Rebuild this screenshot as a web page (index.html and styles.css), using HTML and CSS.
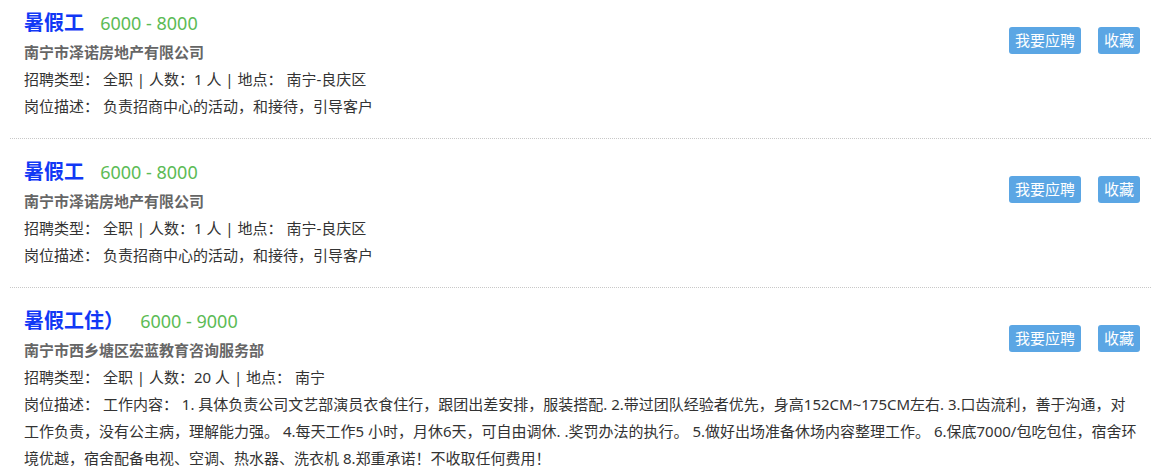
FILE: index.html
```html
<!DOCTYPE html>
<html lang="zh-CN">
<head>
    <meta charset="UTF-8">
    <meta name="viewport" content="width=device-width, initial-scale=1.0">
    <title>职位列表</title>
    <link rel="stylesheet" href="styles.css">
</head>
<body>

    <div class="job-list">
        <div class="job-item">
            <div class="job-actions">
                <button type="button" class="apply-btn">我要应聘</button>
                <button type="button" class="fav-btn">收藏</button>
            </div>
            <div class="job-title">
                <a href="#" class="job-name">暑假工</a>
                <span class="salary">6000 - 8000</span>
            </div>
            <div class="company">南宁市泽诺房地产有限公司</div>
            <div class="job-line">招聘类型： 全职 | 人数：1 人 | 地点： 南宁-良庆区</div>
            <div class="job-line">岗位描述： 负责招商中心的活动，和接待，引导客户</div>
        </div>

        <div class="job-item">
            <div class="job-actions">
                <button type="button" class="apply-btn">我要应聘</button>
                <button type="button" class="fav-btn">收藏</button>
            </div>
            <div class="job-title">
                <a href="#" class="job-name">暑假工</a>
                <span class="salary">6000 - 8000</span>
            </div>
            <div class="company">南宁市泽诺房地产有限公司</div>
            <div class="job-line">招聘类型： 全职 | 人数：1 人 | 地点： 南宁-良庆区</div>
            <div class="job-line">岗位描述： 负责招商中心的活动，和接待，引导客户</div>
        </div>

        <div class="job-item">
            <div class="job-actions">
                <button type="button" class="apply-btn">我要应聘</button>
                <button type="button" class="fav-btn">收藏</button>
            </div>
            <div class="job-title">
                <a href="#" class="job-name">暑假工住）</a>
                <span class="salary">6000 - 9000</span>
            </div>
            <div class="company">南宁市西乡塘区宏蓝教育咨询服务部</div>
            <div class="job-line">招聘类型： 全职 | 人数：20 人 | 地点： 南宁</div>
            <div class="job-line">岗位描述： 工作内容： 1. 具体负责公司文艺部演员衣食住行，跟团出差安排，服装搭配. 2.带过团队经验者优先，身高152CM~175CM左右. 3.口齿流利，善于沟通，对工作负责，没有公主病，理解能力强。 4.每天工作5 小时，月休6天，可自由调休. .奖罚办法的执行。 5.做好出场准备休场内容整理工作。 6.保底7000/包吃包住，宿舍环境优越，宿舍配备电视、空调、热水器、洗衣机 8.郑重承诺！不收取任何费用！</div>
        </div>
    </div>

</body>
</html>
```

FILE: styles.css
```css
body {
    margin: 0;
    font-family: "Noto Sans", "Noto Sans CJK SC", sans-serif;
    background-color: #fff;
    color: #333;
}

.job-list {
    margin-left: 10px;
}

.job-item {
    padding: 18px 11px 18px 14px;
    border-bottom: 1px dotted #c8c8c8;
}

.job-item:first-child {
    padding-top: 8px;
}

.job-item::after {
    content: "";
    display: block;
    clear: both;
}

.job-actions {
    float: right;
    display: flex;
    gap: 17px;
    margin-top: 19px;
}

.apply-btn,
.fav-btn {
    height: 27px;
    padding: 0 6px;
    background-color: #5ba6e4;
    color: #fff;
    border: none;
    border-radius: 3px;
    font-family: "Noto Sans", "Noto Sans CJK SC", sans-serif;
    font-size: 15px;
    line-height: 27px;
    cursor: pointer;
}

.job-title {
    height: 30px;
    line-height: 30px;
}

.job-name {
    font-size: 20px;
    font-weight: bold;
    color: #1238f5;
    text-decoration: none;
}

.salary {
    margin-left: 12px;
    font-size: 18px;
    color: #5cbb55;
}

.company {
    font-size: 15px;
    font-weight: bold;
    color: #666;
    line-height: 28px;
}

.job-line {
    font-size: 15px;
    line-height: 27px;
    color: #333;
}
```
